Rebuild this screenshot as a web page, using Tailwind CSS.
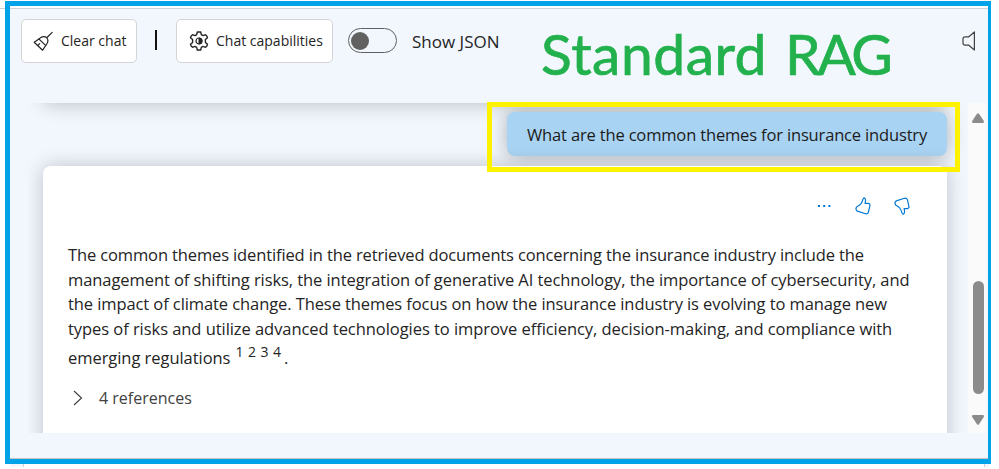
<!DOCTYPE html>
<html lang="en">
<head>
    <meta charset="UTF-8">
    <meta name="viewport" content="width=device-width, initial-scale=1.0">
    <title>Standard RAG</title>
    <script src="https://cdn.jsdelivr.net/npm/@tailwindcss/browser@4"></script>
</head>
<body class="relative h-[469px] overflow-hidden bg-white pt-px pl-[5px] font-['Open_Sans',sans-serif] text-[#242424]">
    <!-- Window edges outside the frame -->
    <div class="absolute top-2 left-0 h-px w-[5px] bg-[#d0d0d0]"></div>
    <div class="absolute top-[464px] left-[10px] h-[3px] w-[14px] border-r border-[#d0d0d0] bg-[#f2f7fe]"></div>
    <div class="absolute top-[464px] left-[984px] h-[3px] w-[5px] border-l border-[#d0d0d0] bg-[#f2f7fe]"></div>

    <div class="flex h-[463px] w-[986px] flex-col border-[5px] border-r-[3px] border-[#00a2e8] bg-white pt-0.5">
        <div class="flex h-[451px] flex-col border-y border-t-[#cfd2d6] border-b-[#c9c4c4] bg-[#f2f7fe]">
            <!-- Toolbar -->
            <header class="flex h-[94px] shrink-0 items-start pt-[10px] pl-[11px]">
                <button class="flex h-11 w-[116px] shrink-0 items-center rounded-[5px] border border-[#d4d4d4] bg-white pl-[11px] text-sm whitespace-nowrap">
                    <svg class="mr-2 h-5 w-5 shrink-0" viewBox="0 0 20 20" fill="none" stroke="#242424" stroke-width="1.2" stroke-linejoin="round" stroke-linecap="round">
                        <path d="M19.200 1.300 14 6.500M7 7.200C9 5.200 12 5 13.600 6.700C15.200 8.400 15.300 11 13.400 13.500L9.600 19.200 1.200 11.200ZM5.800 7.900 12.800 14.600M4.900 14.600 6.600 12.600"/>
                    </svg>
                    <span>Clear chat</span>
                </button>
                <div class="mt-[11px] ml-[18px] h-5 w-0.5 shrink-0 bg-[#111]"></div>
                <button class="ml-[19px] flex h-11 w-[157px] shrink-0 items-center rounded-[5px] border border-[#d4d4d4] bg-white pl-3 text-sm whitespace-nowrap">
                    <svg class="mr-[7px] h-5 w-5 shrink-0" viewBox="0 0 20 20" fill="none" stroke="#242424" stroke-width="1.400" stroke-linejoin="round">
                        <path d="M8.300 1h3.400l.6 2.600 1.700 1 2.500-.9q1.600 1.200 2 3l-2.100 1.900v2.800l2.100 1.900q-.4 1.800-2 3l-2.500-.9-1.700 1-.6 2.600H8.300l-.6-2.600-1.700-1-2.500.9q-1.600-1.200-2-3l2.100-1.900V8.600L1.500 6.700q.4-1.800 2-3l2.500.9 1.700-1Z"/>
                        <circle cx="10" cy="10" r="3" stroke-width="1.200"/>
                        <path d="M10 7a3 3 0 0 1 0 6Z" fill="#242424" stroke-width="1"/>
                    </svg>
                    <span>Chat capabilities</span>
                </button>
                <div class="mt-[9px] ml-[15px] flex h-[25px] w-[49px] shrink-0 items-center rounded-full border border-[#616161] pl-[2px]">
                    <div class="h-[18px] w-[18px] rounded-full bg-[#616161]"></div>
                </div>
                <span class="mt-[11px] ml-[15px] text-[17px] leading-6 whitespace-nowrap">Show JSON</span>
                <svg class="mt-3 ml-auto mr-[12px] h-5 w-[14px] shrink-0" viewBox="0 0 14 20" fill="none" stroke="#424242" stroke-width="1.200" stroke-linejoin="round">
                    <path d="M12.400 1v18L6.800 14.200H3Q1 14.200 1 12.200V7.800Q1 5.800 3 5.800H6.800Z"/>
                </svg>
            </header>

            <!-- Conversation -->
            <div class="flex h-[330px] shrink-0">
                <main class="ml-[18px] flex w-[940px] flex-col overflow-hidden pr-[21px] pl-[15px]">
                    <div class="-mt-[41px] h-10 shrink-0 rounded-lg bg-white shadow-[0_2px_20px_rgba(0,0,0,0.24)]"></div>
                    <div class="mt-[10px] flex h-11 w-[440px] shrink-0 items-center self-end rounded-lg bg-[#a9d3f2] pt-0.5 pl-5 text-[16.5px] whitespace-nowrap text-[#1b1b1b] shadow-[0_0_20px_rgba(0,0,0,0.3)]">
                        <span class="tracking-[-0.16px]">What are the common themes for insurance industry</span>
                    </div>
                    <article class="mt-[10px] h-[300px] shrink-0 rounded-lg bg-white pl-[25px] shadow-[0_0_20px_rgba(0,0,0,0.22)]">
                        <div class="flex h-[77px] items-center justify-end gap-[23px] pr-[37px] pt-[2px] text-[#0078d4]">
                            <svg class="h-4 w-4" viewBox="0 0 16 16" fill="currentColor">
                                <path d="M2 7h2v2H2zM7.200 7h2v2h-2zM12.400 7h2v2h-2z"/>
                            </svg>
                            <svg class="h-[18px] w-4" viewBox="0 0 16 18" fill="none" stroke="currentColor" stroke-width="1.200" stroke-linejoin="round">
                                <path d="M8.700 1c1.700-.3 2.300 1.500 1.400 5.400h3.200q2 .2 1.600 2.200l-1.400 6.300q-.6 2.400-3 1.800L3 14.400q-1.400-.4-1.900-1.900c-.5-1.800.2-2.700 2-3.500C6.400 7.500 7.100 5.400 7.900 2.300Z"/>
                            </svg>
                            <svg class="h-[18px] w-4" viewBox="0 0 16 18" fill="none" stroke="currentColor" stroke-width="1.200" stroke-linejoin="round">
                                <path d="M8.700 17c1.700.3 2.300-1.500 1.400-5.400h3.200q2-.2 1.600-2.200L13.500 3.100q-.6-2.400-3-1.800L3 3.600Q1.600 4 1.100 5.500C.6 7.300 1.300 8.200 3.100 9c3.300 1.500 4 3.600 4.800 6.700Z"/>
                            </svg>
                        </div>
                        <div class="text-[16.5px] leading-[24.6px] whitespace-nowrap">
                            <div class="tracking-[-0.13px]">The common themes identified in the retrieved documents concerning the insurance industry include the</div>
                            <div class="tracking-[-0.075px]">management of shifting risks, the integration of generative AI technology, the importance of cybersecurity, and</div>
                            <div class="tracking-[-0.09px]">the impact of climate change. These themes focus on how the insurance industry is evolving to manage new</div>
                            <div class="tracking-[-0.055px]">types of risks and utilize advanced technologies to improve efficiency, decision-making, and compliance with</div>
                            <div class="mt-[5px] flex">
                                <span class="tracking-[-0.05px]">emerging regulations</span>
                                <span class="-mt-[6px] ml-[5px] flex gap-[4.500px] text-[14px]"><span>1</span><span>2</span><span>3</span><span>4</span></span>
                                <span class="ml-[3px]">.</span>
                            </div>
                        </div>
                        <div class="mt-[15px] flex items-center text-base leading-6 text-[#424242]">
                            <svg class="mr-[16px] ml-[5px] h-4 w-[10px]" viewBox="0 0 10 16" fill="none" stroke="currentColor" stroke-width="1.200">
                                <path d="M1 1l7.500 7L1 15"/>
                            </svg>
                            <span>4 references</span>
                        </div>
                    </article>
                </main>
                <!-- Scrollbar -->
                <div class="flex w-[18px] flex-col items-center bg-[#fafafa] pt-[10px] pl-[2px]">
                    <svg class="h-[10px] w-3 shrink-0" viewBox="0 0 12 10" fill="#8b8b8b"><path d="M5 .8Q6-.4 7 .8L11.800 8Q12.300 10 11 10H1Q-.3 10 .2 8Z"/></svg>
                    <div class="mt-[158px] h-[113px] w-[11px] rounded-full bg-[#8b8b8b]"></div>
                    <svg class="mt-[21px] h-[10px] w-3 shrink-0" viewBox="0 0 12 10" fill="#8b8b8b"><path d="M5 9.200Q6 10.400 7 9.200L11.800 2Q12.300 0 11 0H1Q-.3 0 .2 2Z"/></svg>
                </div>
            </div>
        </div>
    </div>

    <!-- Annotations drawn over the app -->
    <div class="absolute top-[17px] left-[541px] flex gap-[18px] font-[Lato,sans-serif] text-[57px] leading-[72px] whitespace-nowrap text-[#22b14c] [-webkit-text-stroke:0.7px_#22b14c]">
        <span class="tracking-[0.5px]">Standard</span>
        <span class="tracking-[-3.500px]">RAG</span>
    </div>
    <div class="absolute top-[102px] left-[487px] h-[70px] w-[473px] border-[5px] border-[#fff200]"></div>
</body>
</html>
